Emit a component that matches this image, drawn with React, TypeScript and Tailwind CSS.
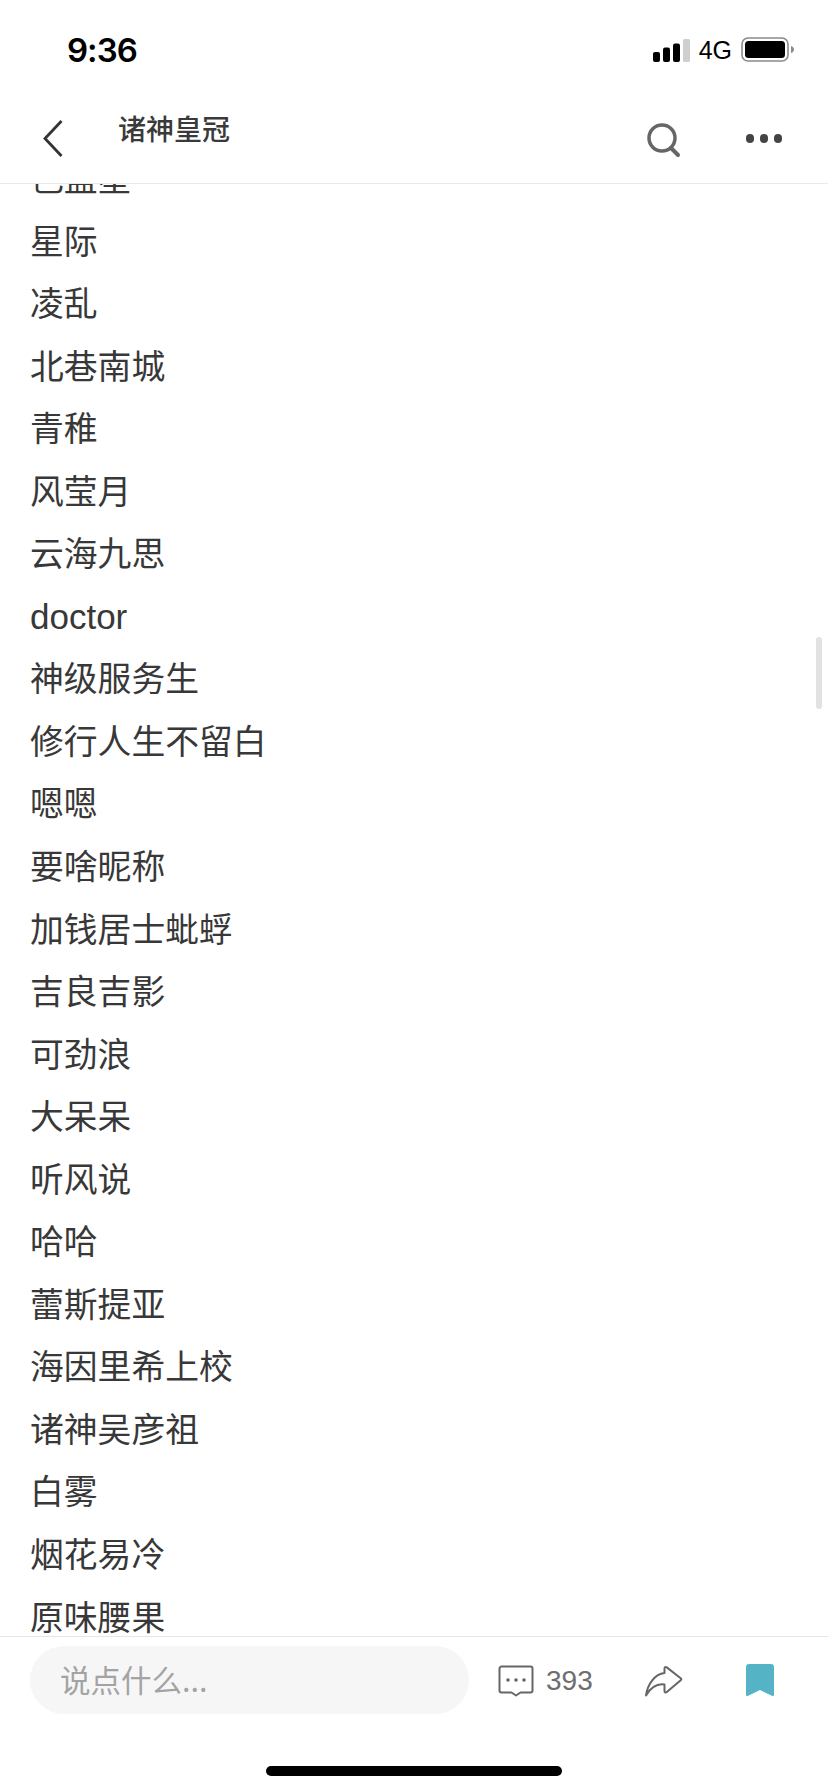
const names = ["星际","凌乱","北巷南城","青稚","风莹月","云海九思","doctor","神级服务生","修行人生不留白","嗯嗯","要啥昵称","加钱居士蚍蜉","吉良吉影","可劲浪","大呆呆","听风说","哈哈","蕾斯提亚","海因里希上校","诸神吴彦祖","白雾","烟花易冷","原味腰果"];
const cjk = { fontFamily: '"Noto Sans CJK SC", "Liberation Sans", sans-serif' };
const latin = { fontFamily: '"Liberation Sans", "Noto Sans CJK SC", sans-serif' };

function Signal() {
  return (
    <svg width="37" height="23" viewBox="0 0 37 23" className="block">
      <rect x="0" y="13" width="7" height="10" rx="2" fill="#000" />
      <rect x="10" y="8.500" width="7" height="14.500" rx="2" fill="#000" />
      <rect x="20" y="4.500" width="7" height="18.500" rx="2" fill="#000" />
      <rect x="30" y="0" width="7" height="23" rx="1.500" fill="#cfcfcf" />
    </svg>
  );
}
function Battery() {
  return (
    <svg width="54" height="26" viewBox="0 0 54 26" className="block">
      <rect x="1" y="1" width="46" height="23" rx="6" fill="none" stroke="#8a8a8a" strokeWidth="1.600" />
      <rect x="4" y="4" width="40" height="17" rx="3.500" fill="#000" />
      <path d="M50 9c2 .6 3 2 3 3.500S52 15.400 50 16z" fill="#8a8a8a" />
    </svg>
  );
}

export default function App() {
  return (
    <div className="w-[828px] h-[1792px] bg-white flex flex-col overflow-hidden relative" style={latin}>
      <header className="h-[184px] shrink-0 border-b border-[#e9e9e9] bg-white flex flex-col z-10">
        <div className="h-[94px] flex items-start justify-between pl-[67px] pr-[33px] pt-[27px]">
          <span className="text-[33px] leading-[46px] text-black tracking-[-1px]" style={{ fontFamily: '"Inter", sans-serif', fontWeight: 600 }}>9:36</span>
          <div className="flex items-center pt-[10px]">
            <Signal />
            <span className="text-[25px] leading-[24px] text-black ml-[9px] mr-[9px]">4G</span>
            <Battery />
          </div>
        </div>
        <div className="flex-1 flex items-start relative">
          <svg width="24" height="40" viewBox="0 0 24 40" fill="none" className="ml-[41px] mt-[25px]">
            <path d="M20.500 2 4 19.500 20.500 37" stroke="#333" strokeWidth="2.800" />
          </svg>
          <span className="ml-[53px] mt-[14px] text-[28px] leading-[40px] font-medium text-[#3a3a3a]" style={cjk}>诸神皇冠</span>
          <svg width="36" height="36" viewBox="0 0 36 36" fill="none" className="ml-auto mt-[28px]">
            <circle cx="16" cy="16" r="13" stroke="#666" strokeWidth="3.500" />
            <path d="M25 26 32 33" stroke="#666" strokeWidth="4" strokeLinecap="round" />
          </svg>
          <div className="flex gap-[5.500px] ml-[64px] mr-[46px] mt-[40px]">
            <span className="w-[8.500px] h-[8.500px] rounded-full bg-[#444]" />
            <span className="w-[8.500px] h-[8.500px] rounded-full bg-[#444]" />
            <span className="w-[8.500px] h-[8.500px] rounded-full bg-[#444]" />
          </div>
        </div>
      </header>

      <main className="flex-1 overflow-hidden pl-[30px] text-[33.800px] text-[#383838]" style={cjk}>
        <div className="-mt-[38px]">
          <div className="h-[62.550px] leading-[62.550px]">色蓝星</div>
          {names.map((n) => (
            <div key={n} className={n === "doctor" ? "h-[62.550px] leading-[62.550px] pt-[2px] whitespace-nowrap text-[35px]" : "h-[62.550px] leading-[62.550px] whitespace-nowrap"} style={n === "doctor" ? latin : undefined}>{n}</div>
          ))}
        </div>
      </main>

      <div className="absolute left-[816px] top-[637px] w-[6px] h-[72px] rounded-full bg-[#e2e2e2]" />

      <footer className="h-[156px] shrink-0 border-t border-[#e6e6e6] bg-white flex flex-col z-10">
        <div className="flex items-start pt-[9px] pl-[30px]">
          <div className="w-[439px] h-[68px] rounded-full bg-[#f6f6f6] flex items-center pl-[30px] text-[30.500px] text-[#a3a3a3]" style={cjk}>说点什么...</div>
          <svg width="36" height="34" viewBox="0 0 36 34" fill="none" className="ml-[29px] mt-[19px]">
            <path d="M3.500 1.500h29a2 2 0 0 1 2 2v22a2 2 0 0 1-2 2H22.500l-4.500 3-4.500-3H3.500a2 2 0 0 1-2-2v-22a2 2 0 0 1 2-2z" stroke="#666" strokeWidth="2" strokeLinejoin="round" />
            <circle cx="10" cy="15" r="1.800" fill="#666" />
            <circle cx="18" cy="15" r="1.800" fill="#666" />
            <circle cx="26" cy="15" r="1.800" fill="#666" />
          </svg>
          <span className="ml-[12px] mt-[18px] text-[28px] leading-[34px] text-[#6e6e6e]">393</span>
          <svg width="40" height="33" viewBox="0 0 40 33" fill="none" className="ml-[51px] mt-[18px]">
            <path d="M2 31.500C3.500 20 11 10 20.500 9V4.500c0-1.500 1-2 2.300-1.100L37 14.500a1 1 0 0 1 0 1.500L22.800 28c-1.200 1-2.300.5-2.300-1V20.500C13 19.500 7 23 2 31.500z" stroke="#666" strokeWidth="2" strokeLinejoin="round" />
          </svg>
          <svg width="28" height="32" viewBox="0 0 28 32" className="ml-[62px] mt-[18px]">
            <path d="M3 0h22a3 3 0 0 1 3 3v27.500c0 1.300-1 1.800-2.200 1.300L14 26 2.200 31.800C1 32.300 0 31.800 0 30.500V3a3 3 0 0 1 3-3z" fill="#54b4c6" />
          </svg>
        </div>
        <div className="mt-auto mb-[16px] mx-auto w-[296px] h-[10px] rounded-full bg-black" />
      </footer>
    </div>
  );
}
